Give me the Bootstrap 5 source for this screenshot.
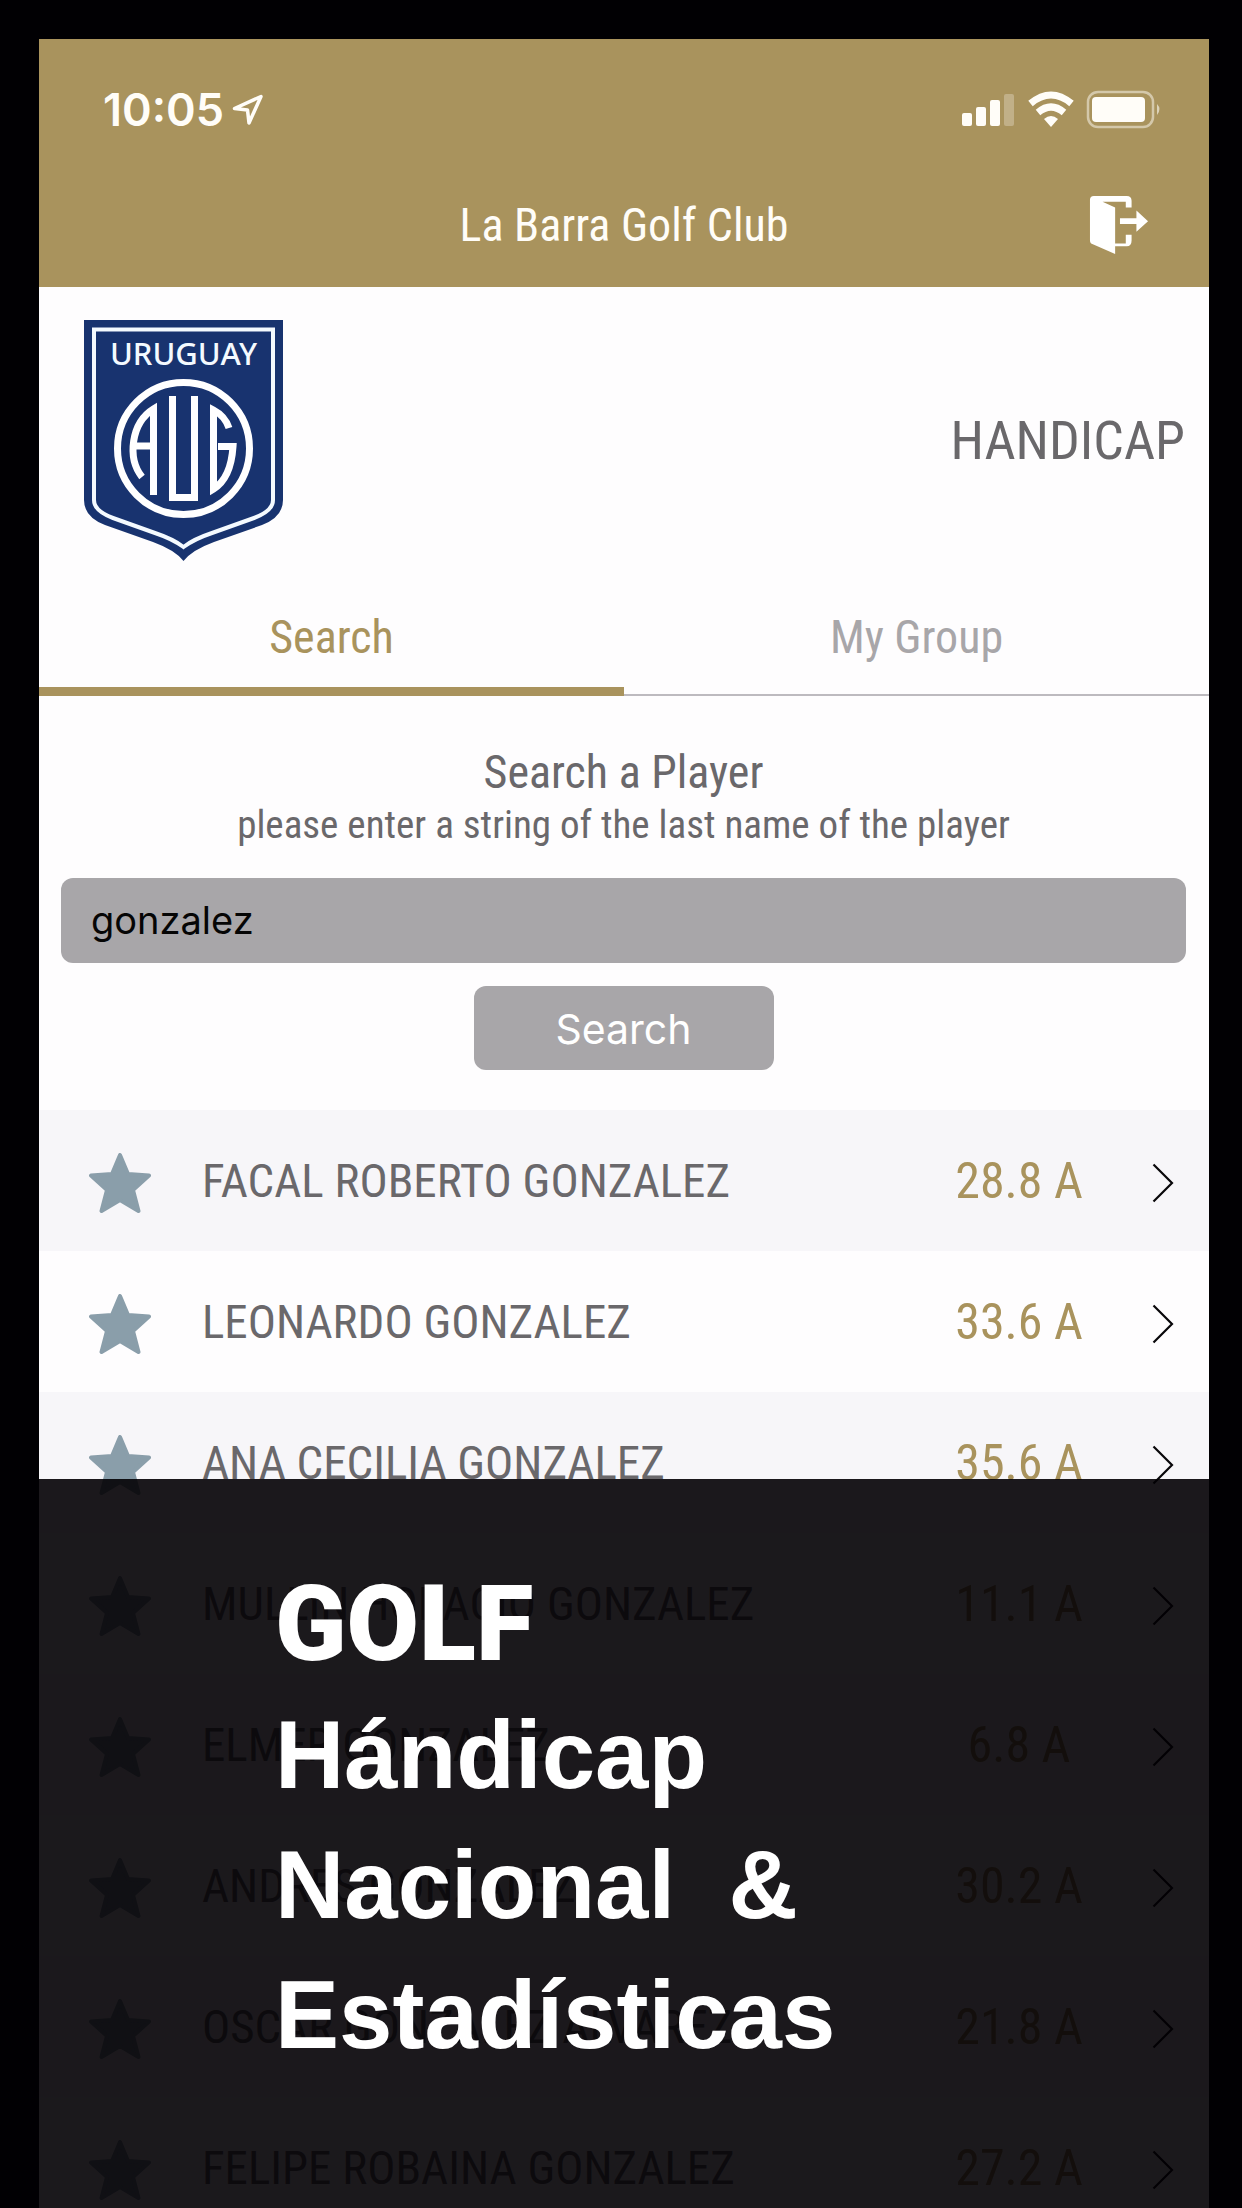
<!DOCTYPE html>
<html lang="es">
<head>
<meta charset="utf-8">
<meta name="viewport" content="width=device-width, initial-scale=1">
<title>La Barra Golf Club</title>
<link href="https://cdn.jsdelivr.net/npm/bootstrap@5.3.0/dist/css/bootstrap.min.css" rel="stylesheet">
<style>
:root { --gold:#a9935d; --ink:#6a686b; --grey:#a8a6a9; }
body { background:#010003; font-family:"Liberation Sans Narrow","Roboto Condensed","Open Sans Condensed","DejaVu Sans Condensed",sans-serif; color:var(--ink); }
svg { display:block; flex:none; }
.stage { height:100vh; padding:39px 33px 0 39px; }
.phone { background:#fefdfe; }
.top-bar { background:var(--gold); color:#fffdf8; }
.status-row { height:140px; padding:0 46px 41px 64px; }
.clock { font:600 45px/56px Inter,sans-serif; }
.title-row { height:108px; padding:0 60px 16px; display:grid; grid-template-columns:60px 1fr 60px; align-items:center; }
.club { font-size:46px; line-height:56px; margin:0; font-weight:400; text-align:center; }
.brand-row { height:314px; padding:0 24px 6px 45px; }
.brand-row h2 { font-size:54px; line-height:64px; margin:0; font-weight:400; }
.tab-row .nav-link { height:95px; border:0; border-bottom:2px solid #bdbabf; border-radius:0; color:var(--grey); font-size:46px; line-height:56px; padding:8px 0 0; }
.tab-row .nav-link.active { border-bottom:9px solid var(--gold); color:var(--gold); background:none; }
.finder { padding:48px 23px 40px 22px; }
.finder label { font-size:46px; line-height:56px; }
.hint { font-size:39px; line-height:50px; margin:0 0 28px; }
.finder .form-control { background:var(--grey); border:0; border-radius:12px; height:85px; padding:0 30px 2px; font:400 38px/48px Inter,sans-serif; color:#050505; }
.finder .btn { background:var(--grey); border:0; border-radius:12px; width:300px; height:84px; margin-top:23px; padding:2px 0 0; font:400 41px/48px Inter,sans-serif; color:#fff; }
.player { height:141px; padding:0 35px 0 50px; background:#fefdfe; color:var(--ink); text-decoration:none; font-size:47px; line-height:56px; }
.player:nth-child(odd) { background:#f7f6f9; }
.who { margin-left:51px; flex:1; white-space:nowrap; }
.score { width:160px; margin-right:53px; text-align:center; color:var(--gold); font-size:50px; }
.promo { left:39px; right:33px; top:1479px; bottom:0; background:rgba(2,0,3,.9); color:#fff; padding:81px 0 0 236px; font:700 96px/130px "Liberation Sans",Arial,sans-serif; white-space:pre; }
.promo p { margin:0; }
.promo .heavy { font-family:Roboto,sans-serif; font-weight:900; font-size:105px; }
</style>
<script src="https://cdn.jsdelivr.net/npm/bootstrap@5.3.0/dist/js/bootstrap.bundle.min.js"></script>
</head>
<body>
<svg width="0" height="0" class="position-absolute" aria-hidden="true">
  <symbol id="star" viewBox="0 0 62 60"><path d="M31 2 L39 21 L60 22.500 L44 37 L49.500 58 L31 47 L12.500 58 L18 37 L2 22.500 L23 21 Z" fill="#8a9eaa" stroke="#8a9eaa" stroke-width="4" stroke-linejoin="round"/></symbol>
  <symbol id="chev" viewBox="0 0 22 40"><path d="M1.500 1.500 L20 20 L1.500 38.500" fill="none" stroke="#08070a" stroke-width="2.200"/></symbol>
</svg>
<div class="stage position-relative overflow-hidden">
<div class="phone">
  <header class="top-bar">
    <div class="status-row d-flex align-items-end justify-content-between">
      <div class="d-flex align-items-center gap-2">
        <span class="clock">10:05</span>
        <svg width="32" height="32" viewBox="0 0 32 32"><path d="M2.500 14.500 L29 2.500 L17 29 L15.500 16 Z" fill="none" stroke="#fffdf8" stroke-width="3.500" stroke-linejoin="round"/></svg>
      </div>
      <svg width="202" height="56" viewBox="0 0 202 56">
        <g fill="#fffdf8">
          <rect x="1" y="31" width="10" height="13" rx="2"/><rect x="15" y="25" width="10" height="19" rx="2"/><rect x="29" y="18" width="10" height="26" rx="2"/><rect x="43" y="12" width="10" height="32" rx="2" opacity=".28"/>
          <rect x="131" y="15" width="53" height="25" rx="4"/><path d="M196 22q5 5 0 11z" opacity=".6"/>
        </g>
        <rect x="127" y="10" width="65" height="35" rx="10" fill="none" stroke="#fffdf8" stroke-width="2.500" opacity=".5"/>
        <g fill="none" stroke="#fffdf8" stroke-width="7"><path d="M69.500 21.500 Q90 4.500 110.500 21.500"/><path d="M77 30.500 Q90 19.500 103 30.500"/></g>
        <path d="M83 37 Q90 31 97 37 L90 45 Z" fill="#fffdf8"/>
      </svg>
    </div>
    <div class="title-row">
      <span></span>
      <h1 class="club">La Barra Golf Club</h1>
      <a href="#" aria-label="Log out"><svg width="60" height="62" viewBox="0 0 62 62"><path d="M5 1 H39 Q44 1 44 6 V13 H38 V7 H14 L27 13 V50 H38 V41 H44 V47 Q44 53 39 53 H27 V61 L4 51 Q1 50 1 47 V5 Q1 1 5 1Z" fill="#fff"/><path d="M32 24 H49 V16 L61 27 L49 38 V30 H32Z" fill="#fff"/></svg></a>
    </div>
  </header>

  <div class="brand-row d-flex align-items-center justify-content-between">
    <svg width="200" height="242" viewBox="0 0 200 242">
      <path d="M0 0 H199 V180 Q199 197 178 205 L130 222 Q108 230 99.500 241 Q91 230 69 222 L21 205 Q0 197 0 180Z" fill="#18336f"/>
      <path d="M10 9.500 H189 V180 Q189 191 170 198 L128 213 Q110 219 99.500 227 Q89 219 71 213 L29 198 Q10 191 10 180Z" fill="none" stroke="#f4faff" stroke-width="4"/>
      <text x="99.500" y="45" text-anchor="middle" font-family="Noto Sans, sans-serif" font-weight="500" font-size="31" fill="#f4faff">URUGUAY</text>
      <circle cx="99.500" cy="128.500" r="66" fill="none" stroke="#fff" stroke-width="7"/>
      <g fill="none" stroke="#fff" stroke-width="7">
        <path d="M58 157 C43 138 47 103 69.500 89 V175"/><path d="M50 126 H69"/>
        <path d="M88.500 76 V177.500 H110.500 V76"/>
        <path d="M145 108 Q141 96 129.500 90 V169 Q147 158 149 126.500 H134"/>
      </g>
    </svg>
    <h2>HANDICAP</h2>
  </div>

  <nav class="nav tab-row nav-fill row g-0">
    <a class="nav-link active col-6" aria-current="page" href="#">Search</a>
    <a class="nav-link col-6" href="#">My Group</a>
  </nav>

  <form class="finder text-center">
    <label for="lastname">Search a Player</label>
    <p class="hint">please enter a string of the last name of the player</p>
    <input id="lastname" class="form-control" type="text" value="gonzalez">
    <button class="btn" type="button">Search</button>
  </form>

  <div class="players">
    <a href="#" class="player d-flex align-items-center"><svg class="mt-1" width="62" height="60"><use href="#star"/></svg><span class="who">FACAL ROBERTO GONZALEZ</span><span class="score">28.8 A</span><svg class="mt-1" width="22" height="40"><use href="#chev"/></svg></a>
    <a href="#" class="player d-flex align-items-center"><svg class="mt-1" width="62" height="60"><use href="#star"/></svg><span class="who">LEONARDO GONZALEZ</span><span class="score">33.6 A</span><svg class="mt-1" width="22" height="40"><use href="#chev"/></svg></a>
    <a href="#" class="player d-flex align-items-center"><svg class="mt-1" width="62" height="60"><use href="#star"/></svg><span class="who">ANA CECILIA GONZALEZ</span><span class="score">35.6 A</span><svg class="mt-1" width="22" height="40"><use href="#chev"/></svg></a>
    <a href="#" class="player d-flex align-items-center"><svg class="mt-1" width="62" height="60"><use href="#star"/></svg><span class="who">MULLIN HORACIO GONZALEZ</span><span class="score">11.1 A</span><svg class="mt-1" width="22" height="40"><use href="#chev"/></svg></a>
    <a href="#" class="player d-flex align-items-center"><svg class="mt-1" width="62" height="60"><use href="#star"/></svg><span class="who">ELMER GONZALEZ</span><span class="score">6.8 A</span><svg class="mt-1" width="22" height="40"><use href="#chev"/></svg></a>
    <a href="#" class="player d-flex align-items-center"><svg class="mt-1" width="62" height="60"><use href="#star"/></svg><span class="who">ANDRES GONZALEZ</span><span class="score">30.2 A</span><svg class="mt-1" width="22" height="40"><use href="#chev"/></svg></a>
    <a href="#" class="player d-flex align-items-center"><svg class="mt-1" width="62" height="60"><use href="#star"/></svg><span class="who">OSCAR GONZALEZ ALVAREZ</span><span class="score">21.8 A</span><svg class="mt-1" width="22" height="40"><use href="#chev"/></svg></a>
    <a href="#" class="player d-flex align-items-center"><svg class="mt-1" width="62" height="60"><use href="#star"/></svg><span class="who">FELIPE ROBAINA GONZALEZ</span><span class="score">27.2 A</span><svg class="mt-1" width="22" height="40"><use href="#chev"/></svg></a>
  </div>
</div>
<div class="promo position-absolute"><p class="heavy">GOLF</p><p>Hándicap</p><p>Nacional  &amp;</p><p>Estadísticas</p></div>
</div>
</body>
</html>
